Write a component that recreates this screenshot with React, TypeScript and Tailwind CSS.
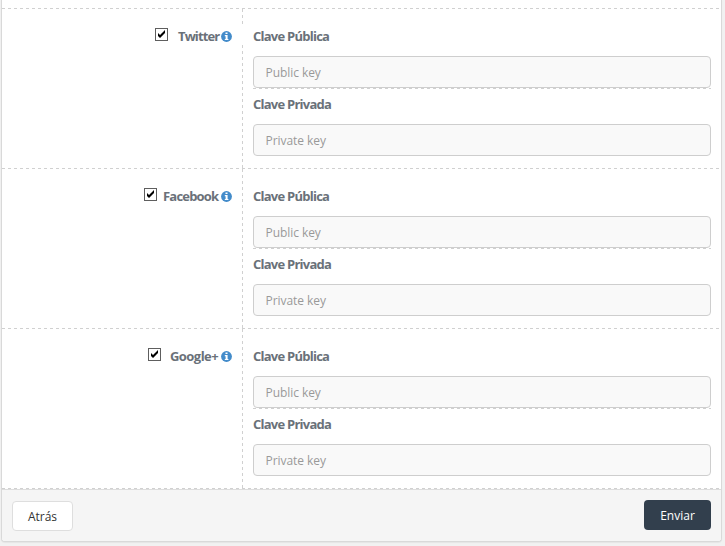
import React from "react";

const H_DASH =
  "bg-[repeating-linear-gradient(90deg,#d0d0d0_0_3px,transparent_3px_6px)]";
const V_DASH =
  "bg-[repeating-linear-gradient(180deg,#d0d0d0_0_3px,transparent_3px_6px)]";

const LABEL = "block whitespace-nowrap text-[13px] font-bold leading-[20px] text-[#6a7179]";

function Checkbox() {
  return (
    <svg width="13" height="13" viewBox="0 0 13 13" className="mt-[19px] shrink-0">
      <rect x="0.5" y="0.5" width="12" height="12" fill="#fff" stroke="#5e5e5e" />
      <path d="M3 5v3l2 2 5-5V2L5 7z" fill="#000" />
    </svg>
  );
}

function InfoIcon() {
  return (
    <svg width="11" height="11" viewBox="0 0 11 11" className="ml-[2px] mt-[22px] shrink-0">
      <circle cx="5.5" cy="5.5" r="5.4" fill="#428bca" />
      <path d="M4.5 1.5h2v1.6h-2zM3.8 4.1h2.8v3.8h.8v1.2H3.8V7.9h.8V5.3h-.8z" fill="#fff" />
    </svg>
  );
}

function Field({ label, hint }: { label: string; hint: string }) {
  return (
    <div className="h-[67px]">
      <div className="h-[35px] pt-[5px]">
        <span className={`${LABEL} tracking-[-0.75px]`}>{label}</span>
      </div>
      <input
        placeholder={hint}
        className="block h-[32px] w-full rounded-[4px] border border-[#cecece] bg-[#f9f9f9] px-[11.5px] text-[12px] tracking-[-0.06px] text-[#555] outline-none placeholder:text-[#999]"
      />
    </div>
  );
}

function Row({ name, size, broken = false }: { name: string; size: string; broken?: boolean }) {
  return (
    <div className="h-[160px]">
      <div className={`h-px ${H_DASH}`} />
      <div className="flex h-[159px]">
        <div className="flex w-[240px] justify-end pr-[10px]">
          <Checkbox />
          <div className={`${size} mt-[17px]`}>
            <span className={LABEL}>{name}</span>
          </div>
          <InfoIcon />
        </div>
        <div className={`flex w-px flex-col ${V_DASH}`}>
          {broken && <div className="mt-[15px] h-[21px] bg-white" />}
        </div>
        <div className="ml-[10px] w-[458px] pt-[12px]">
          <Field label="Clave Pública" hint="Public key" />
          <div className={`h-px ${H_DASH}`} />
          <Field label="Clave Privada" hint="Private key" />
        </div>
      </div>
    </div>
  );
}

export default function App() {
  return (
    <div className="h-[546px] w-[725px] overflow-hidden bg-[#f1f1f1] pl-px font-['Open_Sans','Noto_Sans',sans-serif]">
      <div className="flex h-[542px] w-[721px] flex-col overflow-hidden rounded-b-[4px] border-x border-b border-[#d9d9d9] bg-white shadow-[0_1px_1px_rgba(0,0,0,0.05)]">
        <div className="h-[8px] shrink-0" />
        <Row name="Twitter" size="ml-[10px] w-[41px] tracking-[-0.9px]" broken />
        <Row name="Facebook" size="ml-[6px] w-[56px] tracking-[-0.8px]" />
        <Row name="Google+" size="ml-[9px] w-[49px] tracking-[-0.55px]" />
        <div className={`h-px shrink-0 ${H_DASH}`} />
        <div className="flex flex-1 items-start justify-between border-t border-[#dddddd] bg-[#f5f5f5] pl-[10px] pr-[10px] pt-[10px]">
          <button className="mt-px h-[30px] w-[61px] rounded-[4px] border border-[#dedede] bg-white pt-[2px] text-[12px] text-[#333]">
            Atrás
          </button>
          <button className="h-[30px] w-[67px] rounded-[4px] bg-[#323f4d] pt-[2px] text-[12px] text-white">
            Enviar
          </button>
        </div>
      </div>
    </div>
  );
}
